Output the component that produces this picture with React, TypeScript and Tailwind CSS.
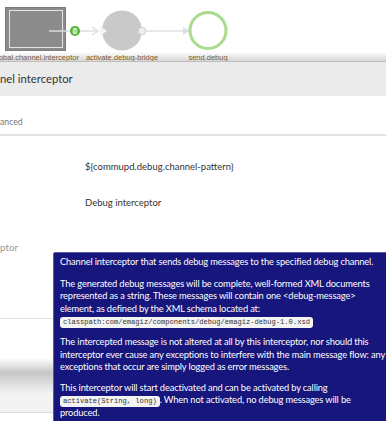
function Diagram() {
  return (
    <svg width="386" height="61" viewBox="0 0 386 61" className="block">
      <rect x="5.5" y="7.5" width="60" height="43" fill="#8b8b8b" stroke="#7a7a7a" />
      <rect x="9.5" y="10.5" width="53" height="37" fill="none" stroke="#e4e4e4" />
      <line x1="49" y1="31" x2="70" y2="31" stroke="#dadada" strokeWidth="1.5" />
      <circle cx="75" cy="31" r="5" fill="#4db52b" />
      <rect x="72.6" y="28" width="4.8" height="6" rx="1.8" fill="#f2f2f2" />
      <line x1="72.6" y1="30" x2="77.4" y2="30" stroke="#4db52b" strokeWidth="0.7" />
      <line x1="72.6" y1="32" x2="77.4" y2="32" stroke="#4db52b" strokeWidth="0.7" />
      <line x1="80" y1="31" x2="97" y2="31" stroke="#dedede" strokeWidth="1.5" />
      <polyline points="92,27 98,31 92,35" fill="none" stroke="#dedede" strokeWidth="1.5" />
      <circle cx="122" cy="30.5" r="20" fill="#c9c9c9" />
      <polygon points="100,26 107,31 100,36" fill="#f4f4f4" />
      <circle cx="142" cy="31" r="3.8" fill="#eeeeee" stroke="#cfcfcf" />
      <line x1="146" y1="31" x2="186" y2="31" stroke="#e0e0e0" strokeWidth="1.5" />
      <polygon points="183,27 190,31 183,35" fill="#e0e0e0" />
      <circle cx="208" cy="30.5" r="18" fill="#ffffff" stroke="#a8dc8c" strokeWidth="3" />
      <g fontFamily="'Liberation Sans', Arial, sans-serif" fontSize="7.5" fill="#7a5a2c" textAnchor="middle">
        <text x="36" y="60">global.channel.interceptor</text>
        <text x="122" y="60">activate.debug-bridge</text>
        <text x="208" y="60">send.debug</text>
      </g>
    </svg>
  );
}

function Code({ children }: { children: React.ReactNode }) {
  return (
    <span className="inline-block rounded-[3px] bg-[#f3f3f3] px-[3px] font-['Liberation_Mono',monospace] text-[7.1px] leading-[11px] tracking-normal text-[#333]">
      {children}
    </span>
  );
}

function Tooltip() {
  return (
    <div className="absolute left-[53px] top-[252px] w-[345px] rounded-[2px] border border-[#5a5aaa] bg-[#16167c] px-[6px] pt-[3px] pb-4 text-[9.3px] leading-[12.5px] tracking-[-0.14px] text-white whitespace-nowrap">
      <p>Channel interceptor that sends debug messages to the specified debug channel.</p>
      <p className="mt-[9px]">
        The generated debug messages will be complete, well-formed XML documents
        <br />
        represented as a string. These messages will contain one &lt;debug-message&gt;
        <br />
        element, as defined by the XML schema located at:
        <br />
        <Code>classpath:com/emagiz/components/debug/emagiz-debug-1.0.xsd</Code>
      </p>
      <p className="mt-[8px]">
        The intercepted message is not altered at all by this interceptor, nor should this
        <br />
        interceptor ever cause any exceptions to interfere with the main message flow: any
        <br />
        exceptions that occur are simply logged as error messages.
      </p>
      <p className="mt-[8px]">
        This interceptor will start deactivated and can be activated by calling
        <br />
        <Code>activate(String, long)</Code>. When not activated, no debug messages will be
        <br />
        produced.
      </p>
    </div>
  );
}

export default function App() {
  return (
    <div className="relative h-[421px] w-[386px] overflow-hidden bg-white font-['Lato',sans-serif]">
      <div className="h-[61px] bg-gradient-to-b from-white from-[85%] to-[#d6d6d6]">
        <Diagram />
      </div>

      <div className="border-t border-[#bdbdbd] bg-white">
        <div className="flex h-[34px] items-center bg-[#ebebeb] text-[11.3px] text-[#333]">
          nel interceptor
        </div>
        <div className="h-[40px] border-b-2 border-[#e2e2e2] pt-[19px] text-[8.7px] leading-[14px] text-[#777]">
          anced
        </div>
        <div className="pt-[24px] text-[9.5px] leading-[14px] text-[#333]">
          <div className="pl-[85px]">${"{"}commupd.debug.channel-pattern{"}"}</div>
          <div className="mt-[22px] pl-[85px]">Debug interceptor</div>
          <div className="mt-[30px] text-[9.8px] text-[#999]">ptor</div>
          <div className="h-[64px]" />
          <div className="h-[40px] border-t border-[#e2e2e2]" />
          <div className="h-[14px] bg-gradient-to-b from-white to-[#cacaca]" />
        </div>
      </div>

      <div className="h-[22px] bg-gradient-to-b from-[#c6c6c6] to-[#f3f3f3]" />
      <div className="h-[18px] bg-[#f3f3f3]" />
      <div className="h-[20px] border-t border-[#dcdcdc] bg-white" />

      <Tooltip />
    </div>
  );
}
